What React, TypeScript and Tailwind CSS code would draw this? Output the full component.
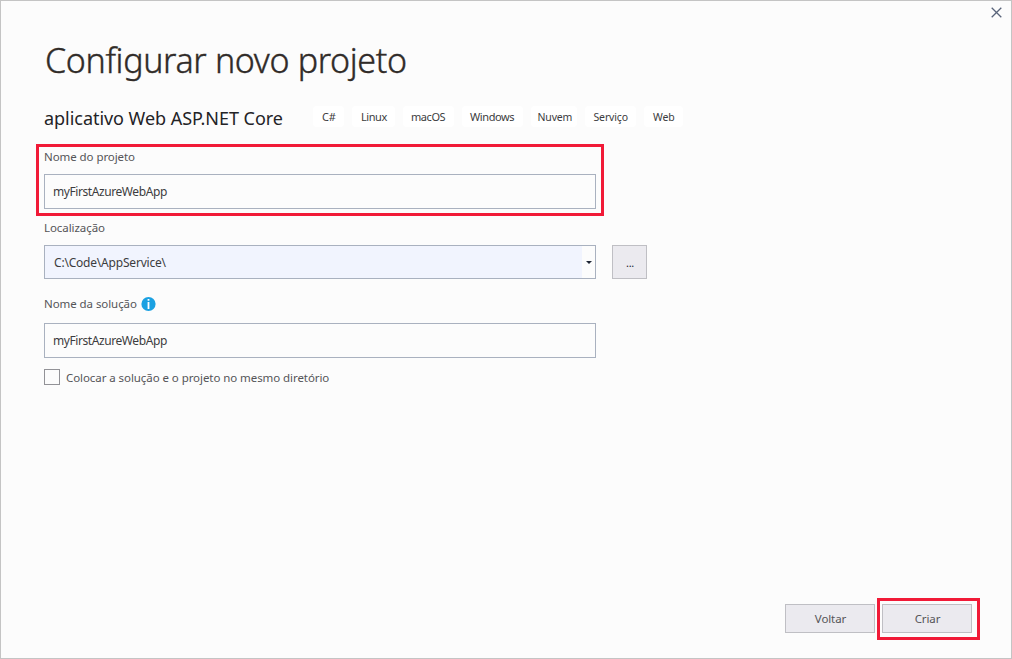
import type { ReactNode } from "react";

const tags = [
  { label: "C#", box: "w-[31px] pl-[9px] text-[11px] tracking-[-0.2px]" },
  { label: "Linux", box: "w-[43px] pl-[9px] text-[11px] tracking-[-0.45px]" },
  { label: "macOS", box: "w-[51px] pl-[8px] text-[11px] tracking-[-0.45px]" },
  { label: "Windows", box: "w-[61px] pl-[8px] text-[11px] tracking-[-0.4px]" },
  { label: "Nuvem", box: "w-[46px] pl-[6.5px] pt-px text-[10.5px] tracking-[-0.15px]" },
  { label: "Serviço", box: "w-[51px] pl-[8.5px] pt-px text-[10.5px] tracking-[-0.15px]" },
  { label: "Web", box: "w-[39px] pl-[9px] pt-px text-[10.5px] tracking-[-0.1px]" },
];

function Label({ children }: { children: ReactNode }) {
  return <span className="block h-4 text-[11.5px] leading-[14px] tracking-[-0.07px] text-[#555558]">{children}</span>;
}

function Field({ value }: { value: string }) {
  return (
    <div className="flex h-[35px] w-[552px] items-center border border-[#a9b1bf] bg-[#fcfcfc] pl-2 text-[12px] tracking-[-0.42px] text-[#3c3c40]">
      {value}
    </div>
  );
}

function Button({ children }: { children: ReactNode }) {
  return (
    <button className="flex h-[29px] w-[90px] items-center justify-center border border-[#bfbfc4] bg-[#ebeaef] pl-px text-[11.5px] tracking-[-0.1px] text-[#555558]">
      {children}
    </button>
  );
}

export default function App() {
  return (
    <div className="flex h-[659px] w-[1012px] flex-col overflow-hidden border border-[#c4c4c4] bg-[#fcfcfc] font-['Noto_Sans',sans-serif] whitespace-nowrap">
      <header className="flex h-[37px] shrink-0 justify-end pt-1.5 pr-[9px]">
        <svg className="h-[11px] w-[11px]" viewBox="0 0 11 11" fill="none" stroke="#59647a" strokeWidth="1.3">
          <path d="M0.7 0.7 10.3 10.3M10.3 0.7 0.7 10.3" />
        </svg>
      </header>

      <main className="flex flex-1 flex-col items-start pl-[43px]">
        <h1 className="h-11 pl-px text-[34px] leading-[44px] font-light tracking-[-0.35px] text-[#302b28] [-webkit-text-stroke:0.4px_#302b28]">Configurar novo projeto</h1>

        <div className="mt-[22px] flex h-7 items-start">
          <h2 className="w-[269px] text-[18px] leading-[28px] tracking-[-0.04px] text-[#232326]">aplicativo Web ASP.NET Core</h2>
          <ul className="mt-[2px] flex gap-2">
            {tags.map((t) => (
              <li key={t.label} className={"h-[21px] rounded-[4px] bg-white leading-[21px] text-[#3c3c40] " + t.box}>
                {t.label}
              </li>
            ))}
          </ul>
        </div>

        <section className="mt-3 -ml-2 h-[72px] w-[568px] border-[3px] border-[#f11a37] pt-[3px] pl-[5px]">
          <Label>Nome do projeto</Label>
          <div className="mt-2">
            <Field value="myFirstAzureWebApp" />
          </div>
        </section>

        <section className="mt-[5px]">
          <Label>Localização</Label>
          <div className="mt-2 flex gap-4">
            <div className="flex h-[34px] w-[552px] items-center border border-[#a9b1bf] bg-[#f1f4fe] pl-[9px] text-[12px] tracking-[-0.2px] text-[#3c3c40]">
              <span className="flex-1 pt-px">C:\Code\AppService\</span>
              <span className="flex h-full w-[13px] items-center justify-center bg-[#fcfcfc]">
                <svg className="h-[3px] w-[6px]" viewBox="0 0 6 3">
                  <path d="M0 0h6L3 3z" fill="#1d2433" />
                </svg>
              </span>
            </div>
            <button className="flex h-[34px] w-[35px] items-center justify-center border border-[#bfbfc4] bg-[#ebeaef] pt-[3px] pl-px text-[11px] tracking-[-0.3px] text-[#1d2433]">
              ...
            </button>
          </div>
        </section>

        <section className="mt-[18px]">
          <div className="flex h-4">
            <div className="w-[97px]">
              <Label>Nome da solução</Label>
            </div>
            <svg className="-mt-px h-4 w-[15px]" viewBox="0 0 15 16">
              <circle cx="7.5" cy="8" r="7.1" fill="#1ba1e2" />
              <path d="M6.6 3h1.8v1.8H6.6zM6.6 5.9h1.8v7H6.6z" fill="#fff" />
            </svg>
          </div>
          <div className="mt-[10px]">
            <Field value="myFirstAzureWebApp" />
          </div>
        </section>

        <label className="mt-[11px] flex">
          <span className="h-4 w-4 border border-[#929297] bg-[#fcfcfc]" />
          <span className="ml-[6px] pt-[2px]">
            <Label>Colocar a solução e o projeto no mesmo diretório</Label>
          </span>
        </label>
      </main>

      <footer className="flex h-[60px] shrink-0 items-start justify-end gap-[2px] pr-[31px]">
        <div className="pt-[6px]">
          <Button>Voltar</Button>
        </div>
        <div className="h-[42px] w-[103px] border-[3px] border-[#f11a37] pt-[3px] pl-[2px]">
          <Button>Criar</Button>
        </div>
      </footer>
    </div>
  );
}
